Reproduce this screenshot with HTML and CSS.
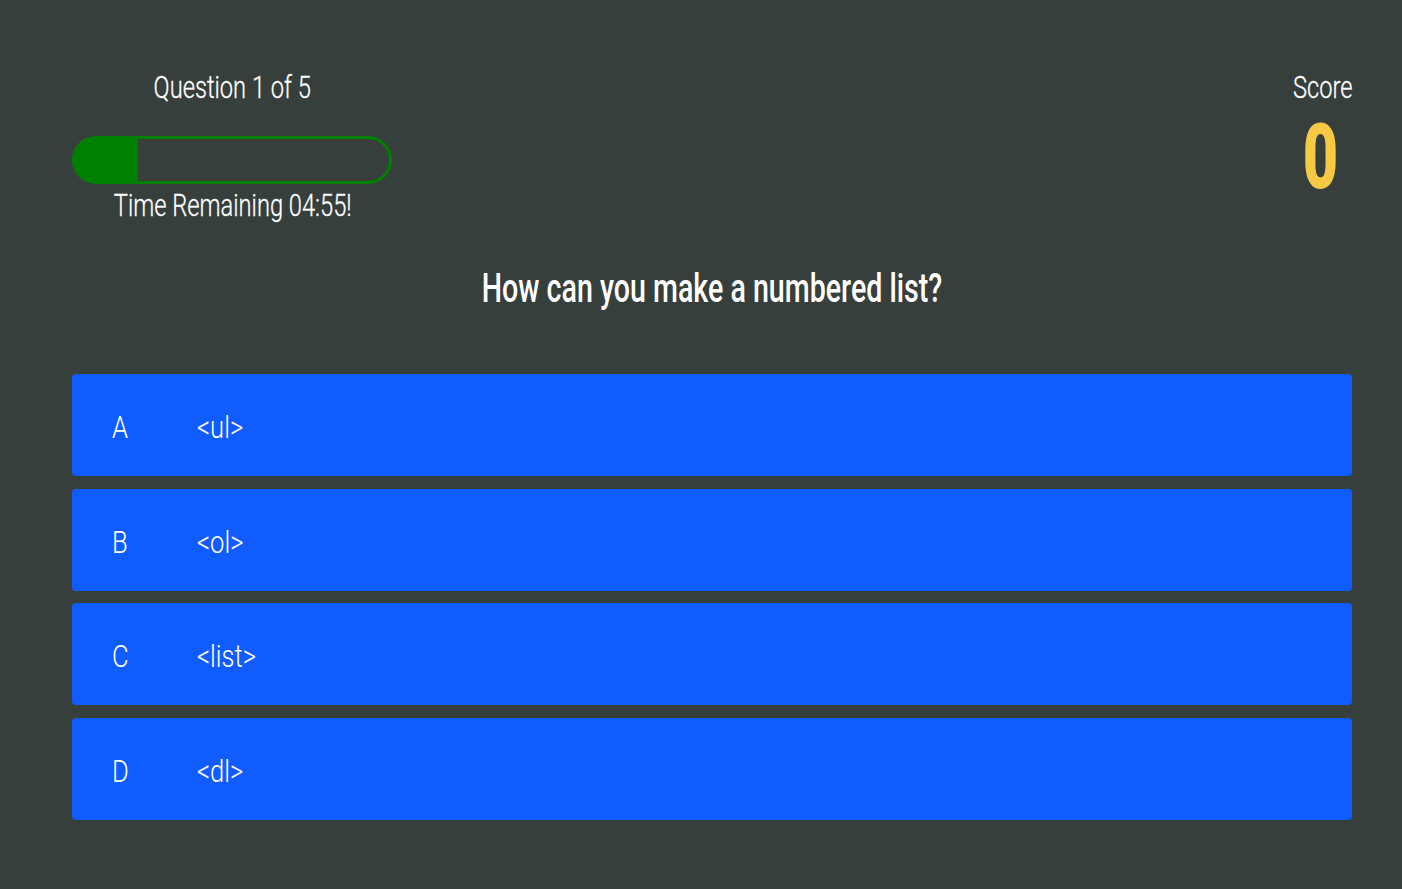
FILE: index.html
```html
<!DOCTYPE html>
<html lang="en">
<head>
<meta charset="utf-8">
<title>Quiz</title>
<link rel="stylesheet" href="styles.css">
</head>
<body>
<main class="quiz">
  <header class="hud">
    <div class="progress-block">
      <p class="hud-text"><span class="cn">Question 1 of 5</span></p>
      <div class="bar"><div class="bar-fill" style="width:20%"></div></div>
      <p class="hud-text time"><span class="cn">Time Remaining 04:55!</span></p>
    </div>
    <div class="score-block">
      <p class="hud-text"><span class="cn cn-right">Score</span></p>
      <p class="score"><span class="cn cn-right score-digit">0</span></p>
    </div>
  </header>
  <h1 class="question"><span class="cn cn-question">How can you make a numbered list?</span></h1>
  <div class="choices">
    <div class="choice"><span class="letter"><span class="cn cn-left">A</span></span><span class="answer"><span class="cn cn-left">&lt;ul&gt;</span></span></div>
    <div class="choice"><span class="letter"><span class="cn cn-left">B</span></span><span class="answer"><span class="cn cn-left">&lt;ol&gt;</span></span></div>
    <div class="choice"><span class="letter"><span class="cn cn-left">C</span></span><span class="answer"><span class="cn cn-left">&lt;list&gt;</span></span></div>
    <div class="choice"><span class="letter"><span class="cn cn-left">D</span></span><span class="answer"><span class="cn cn-left">&lt;dl&gt;</span></span></div>
  </div>
</main>
</body>
</html>
```

FILE: styles.css
```css
html, body {
  margin: 0;
  padding: 0;
}
body {
  background: #373f3d;
  color: #ffffff;
  font-family: Roboto, "Liberation Sans", sans-serif;
  min-height: 889px;
}
p, h1 {
  margin: 0;
}
.cn {
  display: inline-block;
  white-space: nowrap;
  transform: scaleX(0.74);
  transform-origin: center;
}
.cn-left {
  transform-origin: left center;
}
.cn-right {
  transform-origin: right center;
}
.quiz {
  width: 1280px;
  margin-left: 72px;
  padding-top: 69px;
}
.hud {
  display: flex;
  justify-content: space-between;
  align-items: flex-start;
}
.progress-block {
  width: 320px;
  text-align: center;
}
.hud-text {
  font-size: 32px;
  line-height: 36px;
  font-weight: 300;
  -webkit-text-stroke: 0.3px #ffffff;
  white-space: nowrap;
}
.bar {
  box-sizing: border-box;
  margin-top: 31px;
  height: 48px;
  border: 3px solid #008000;
  border-radius: 24px;
  overflow: hidden;
}
.bar-fill {
  height: 100%;
  background: #008000;
}
.time {
  margin-top: 3px;
}
.score-block {
  text-align: right;
}
.score {
  color: #f7c844;
  font-size: 90px;
  line-height: 90px;
  font-weight: 900;
  margin-top: 8px;
  margin-right: 14px;
}
.score-digit {
  transform: scaleX(0.68);
}
.question {
  text-align: center;
  font-size: 40px;
  line-height: 48px;
  font-weight: 500;
  margin-top: 42px;
}
.cn-question {
  transform: scaleX(0.715);
}
.choices {
  margin-top: 61px;
  display: flex;
  flex-direction: column;
  gap: 12.7px;
}
.choice {
  display: flex;
  align-items: center;
  height: 102px;
  box-sizing: border-box;
  padding-left: 40px;
  padding-top: 4px;
  background: #105cff;
  border-radius: 4px;
  font-size: 32px;
  font-weight: 300;
}
.choice .cn {
  transform: scaleX(0.8);
}
.letter {
  width: 85px;
}
```
